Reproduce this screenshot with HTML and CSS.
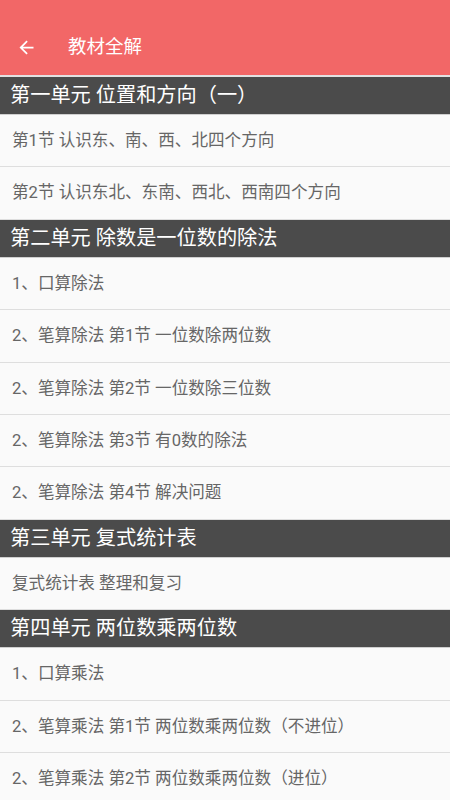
FILE: index.html
```html
<!DOCTYPE html>
<html lang="zh-CN">
<head>
<meta charset="utf-8">
<title>教材全解</title>
<link rel="stylesheet" href="styles.css">
</head>
<body>
<header class="appbar">
  <svg class="back" width="21" height="21" viewBox="0 0 24 24"><path d="M20 11H7.83l5.59-5.59L12 4l-8 8 8 8 1.41-1.41L7.83 13H20v-2z" fill="#fff"/></svg>
  <span class="title">教材全解</span>
</header>
<main class="list">
  <div class="unit">第一单元 位置和方向（一）</div>
  <div class="item">第1节 认识东、南、西、北四个方向</div>
  <div class="item">第2节 认识东北、东南、西北、西南四个方向</div>
  <div class="unit">第二单元 除数是一位数的除法</div>
  <div class="item">1、口算除法</div>
  <div class="item">2、笔算除法 第1节 一位数除两位数</div>
  <div class="item">2、笔算除法 第2节 一位数除三位数</div>
  <div class="item">2、笔算除法 第3节 有0数的除法</div>
  <div class="item">2、笔算除法 第4节 解决问题</div>
  <div class="unit">第三单元 复式统计表</div>
  <div class="item">复式统计表 整理和复习</div>
  <div class="unit">第四单元 两位数乘两位数</div>
  <div class="item">1、口算乘法</div>
  <div class="item">2、笔算乘法 第1节 两位数乘两位数（不进位）</div>
  <div class="item">2、笔算乘法 第2节 两位数乘两位数（进位）</div>
</main>
</body>
</html>
```
FILE: styles.css
```css
html, body {
  margin: 0;
  padding: 0;
}
body {
  background: #fafafa;
  font-family: Roboto, "Noto Sans CJK SC", sans-serif;
  overflow: hidden;
}
.appbar {
  box-sizing: border-box;
  height: 77px;
  padding: 21px 0 0 16px;
  background: #f26767;
  border-bottom: 2px solid #e2e2e2;
  display: flex;
  align-items: center;
}
.appbar > * {
  margin-top: -2px;
}
.back {
  display: block;
  flex: none;
}
.title {
  color: #fff;
  font-size: 18.5px;
  line-height: 24px;
  margin-left: 31px;
}
.list {
  display: flex;
  flex-direction: column;
}
.unit {
  height: 37px;
  background: #4b4b4b;
  color: #fff;
  font-size: 20.2px;
  line-height: 37px;
  padding-left: 10px;
  border-bottom: 1px solid #cfcfcf;
  white-space: nowrap;
}
.item {
  height: 51.4px;
  line-height: 51.4px;
  color: #666;
  font-size: 16.6px;
  padding-left: 12px;
  border-bottom: 1px solid #dedede;
  white-space: nowrap;
}
```
